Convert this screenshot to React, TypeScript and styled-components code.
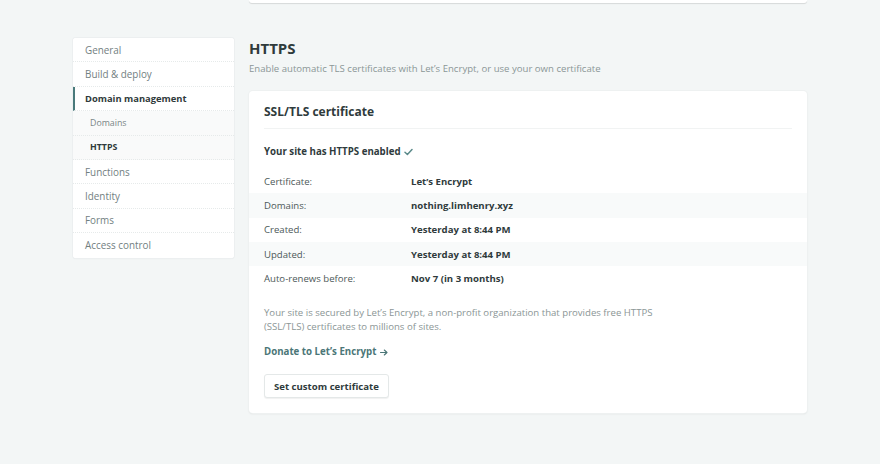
import React from "react";
import styled, { createGlobalStyle } from "styled-components";

const Global = createGlobalStyle`
  html, body { margin: 0; padding: 0; background: #f3f6f6; }
  body { font-family: "Open Sans", "Liberation Sans", sans-serif; color: #313d3e; -webkit-font-smoothing: antialiased; }
  * { box-sizing: border-box; }
`;

const Page = styled.div`
  width: 734px;
  margin: 0 auto;
  min-height: 464px;
`;

const TopCard = styled.div`
  margin-left: 176px;
  height: 3px;
  background: #fff;
  border-radius: 0 0 4px 4px;
  box-shadow: 0 1px 1px rgba(0, 0, 0, 0.12);
  margin-bottom: 35px;
`;

const Columns = styled.div`
  display: grid;
  grid-template-columns: 161px 558px;
  column-gap: 15px;
  align-items: start;
`;

const Sidebar = styled.nav`
  background: #fff;
  border-radius: 3px;
  box-shadow: 0 0 0 1px #eceff0, 0 1px 1px rgba(0, 0, 0, 0.08);
  overflow: hidden;
`;

const NavItem = styled.div<{ $active?: boolean; $sub?: boolean; $current?: boolean }>`
  height: 24.4px;
  display: flex;
  align-items: center;
  padding-left: ${(p) => (p.$sub ? 17 : p.$active ? 10 : 12)}px;
  border-left: ${(p) => (p.$active ? "2px solid #4a7a7b" : "none")};
  border-bottom: 1px dotted #e6eaea;
  background: ${(p) => (p.$sub ? "#f9fafa" : "#fff")};
  font-size: ${(p) => (p.$sub ? 8.8 : p.$active ? 9.4 : 9.9)}px;
  font-weight: ${(p) => (p.$active || p.$current ? 700 : 400)};
  color: ${(p) => (p.$active || p.$current ? "#2f3a3b" : p.$sub ? "#7a8686" : "#72807f")};
  &:last-child { border-bottom: none; }
`;

const Main = styled.main``;

const Title = styled.h2`
  margin: 0;
  font-size: 15px;
  line-height: 20px;
  font-weight: 700;
  color: #2f3b3c;
`;

const Subtitle = styled.p`
  margin: 5px 0 0;
  font-size: 9.6px;
  line-height: 12px;
  color: #8b9797;
`;

const Card = styled.section`
  margin-top: 16px;
  background: #fff;
  border-radius: 4px;
  box-shadow: 0 0 0 1px #eef1f1, 0 1px 2px rgba(0, 0, 0, 0.1);
  padding: 13px 15px 15px;
`;

const CardHeader = styled.h3`
  margin: 0;
  font-size: 12px;
  line-height: 16px;
  font-weight: 700;
  color: #2f3b3c;
  padding-bottom: 8px;
  border-bottom: 1px solid #f1f3f3;
`;

const Status = styled.div`
  margin-top: 16px;
  display: flex;
  align-items: center;
  gap: 3px;
  font-size: 9.7px;
  line-height: 14px;
  font-weight: 700;
  color: #2f3b3c;
`;

const Table = styled.div`
  margin: 10px -15px 0;
`;

const Row = styled.div<{ $striped?: boolean }>`
  display: grid;
  grid-template-columns: 147px 1fr;
  align-items: center;
  height: 24.3px;
  padding: 0 15px;
  background: ${(p) => (p.$striped ? "#f8fafa" : "transparent")};
  font-size: 9.6px;
`;

const Label = styled.span`
  color: #4d5959;
`;

const Value = styled.span`
  color: #2f3b3c;
  font-weight: 700;
`;

const Note = styled.p`
  margin: 16px 0 0;
  max-width: 400px;
  font-size: 9.6px;
  line-height: 14px;
  color: #8b9696;
`;

const Donate = styled.a`
  display: flex;
  align-items: center;
  gap: 4px;
  margin-top: 11px;
  font-size: 9.7px;
  line-height: 14px;
  font-weight: 700;
  color: #4b7677;
  text-decoration: none;
`;

const Button = styled.button`
  margin-top: 15px;
  height: 24px;
  padding: 0 9px;
  background: #fff;
  border: 1px solid #e4e8e8;
  border-radius: 3px;
  box-shadow: 0 1px 1px rgba(0, 0, 0, 0.06);
  font-family: inherit;
  font-size: 9.6px;
  font-weight: 700;
  color: #2f3b3c;
`;

const Check = () => (
  <svg width="9" height="8" viewBox="0 0 9 8" aria-hidden>
    <path d="M1 4.3 L3.4 6.5 L8 1.5" fill="none" stroke="#5b8a8a" strokeWidth="1.5" strokeLinecap="round" strokeLinejoin="round" />
  </svg>
);

const Arrow = () => (
  <svg width="8" height="7" viewBox="0 0 8 7" aria-hidden>
    <path d="M0.5 3.5 H7 M4.3 1 L7 3.5 L4.3 6" fill="none" stroke="#4b7677" strokeWidth="1.1" strokeLinecap="round" strokeLinejoin="round" />
  </svg>
);

const nav = [
  { label: "General" },
  { label: "Build & deploy" },
  { label: "Domain management", active: true },
  { label: "Domains", sub: true },
  { label: "HTTPS", sub: true, current: true },
  { label: "Functions" },
  { label: "Identity" },
  { label: "Forms" },
  { label: "Access control" },
];

const rows = [
  ["Certificate:", "Let’s Encrypt"],
  ["Domains:", "nothing.limhenry.xyz"],
  ["Created:", "Yesterday at 8:44 PM"],
  ["Updated:", "Yesterday at 8:44 PM"],
  ["Auto-renews before:", "Nov 7 (in 3 months)"],
];

export default function App() {
  return (
    <>
      <Global />
      <Page>
        <TopCard />
        <Columns>
          <Sidebar>
            {nav.map((n) => (
              <NavItem key={n.label} $active={n.active} $sub={n.sub} $current={n.current}>
                {n.label}
              </NavItem>
            ))}
          </Sidebar>
          <Main>
            <Title>HTTPS</Title>
            <Subtitle>Enable automatic TLS certificates with Let’s Encrypt, or use your own certificate</Subtitle>
            <Card>
              <CardHeader>SSL/TLS certificate</CardHeader>
              <Status>
                Your site has HTTPS enabled <Check />
              </Status>
              <Table>
                {rows.map(([l, v], i) => (
                  <Row key={l} $striped={i % 2 === 1}>
                    <Label>{l}</Label>
                    <Value>{v}</Value>
                  </Row>
                ))}
              </Table>
              <Note>
                Your site is secured by Let’s Encrypt, a non-profit organization that provides free HTTPS (SSL/TLS) certificates to millions of sites.
              </Note>
              <Donate href="#">
                Donate to Let’s Encrypt <Arrow />
              </Donate>
              <Button>Set custom certificate</Button>
            </Card>
          </Main>
        </Columns>
      </Page>
    </>
  );
}
